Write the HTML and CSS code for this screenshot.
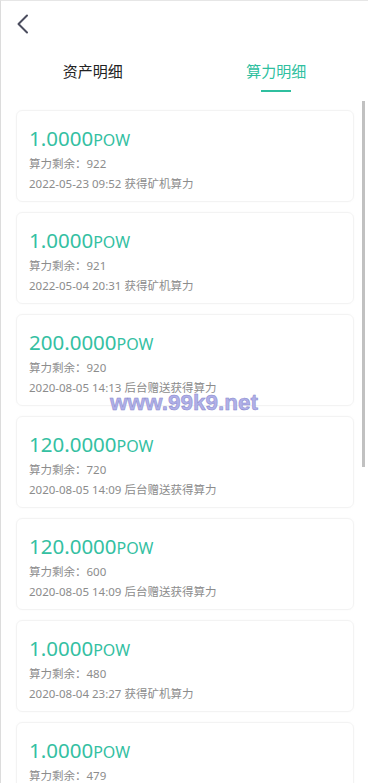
FILE: index.html
```html
<!DOCTYPE html>
<html lang="zh-CN">
<head>
<meta charset="utf-8">
<title>算力明细</title>
<link rel="stylesheet" href="styles.css">
</head>
<body>
<div class="page">
  <header class="topbar">
    <svg class="back" width="14" height="20" viewBox="0 0 14 20"><path d="M11 1.5 L2.5 10 L11 18.5" fill="none" stroke="#4b4d5e" stroke-width="2" stroke-linecap="round" stroke-linejoin="round"/></svg>
  </header>
  <nav class="tabs">
    <div class="tab">资产明细</div>
    <div class="tab active">算力明细</div>
  </nav>
  <main class="list">
    <div class="card">
      <div class="amount">1.0000<span class="unit">POW</span></div>
      <div class="meta">算力剩余：922</div>
      <div class="meta">2022-05-23 09:52 获得矿机算力</div>
    </div>
    <div class="card">
      <div class="amount">1.0000<span class="unit">POW</span></div>
      <div class="meta">算力剩余：921</div>
      <div class="meta">2022-05-04 20:31 获得矿机算力</div>
    </div>
    <div class="card">
      <div class="amount">200.0000<span class="unit">POW</span></div>
      <div class="meta">算力剩余：920</div>
      <div class="meta">2020-08-05 14:13 后台赠送获得算力</div>
    </div>
    <div class="card">
      <div class="amount">120.0000<span class="unit">POW</span></div>
      <div class="meta">算力剩余：720</div>
      <div class="meta">2020-08-05 14:09 后台赠送获得算力</div>
    </div>
    <div class="card">
      <div class="amount">120.0000<span class="unit">POW</span></div>
      <div class="meta">算力剩余：600</div>
      <div class="meta">2020-08-05 14:09 后台赠送获得算力</div>
    </div>
    <div class="card">
      <div class="amount">1.0000<span class="unit">POW</span></div>
      <div class="meta">算力剩余：480</div>
      <div class="meta">2020-08-04 23:27 获得矿机算力</div>
    </div>
    <div class="card">
      <div class="amount">1.0000<span class="unit">POW</span></div>
      <div class="meta">算力剩余：479</div>
      <div class="meta">2020-08-04 23:26 获得矿机算力</div>
    </div>
  </main>
  <div class="scrollthumb"></div>
  <div class="watermark">www.99k9.net</div>
</div>
</body>
</html>
```

FILE: styles.css
```css
html, body {
  margin: 0;
  padding: 0;
  background: #fff;
}
body {
  font-family: "Noto Sans", "Noto Sans CJK SC", sans-serif;
  overflow: hidden;
}
.page {
  position: relative;
  width: 368px;
  height: 783px;
  box-sizing: border-box;
  border-top: 1px solid #e6e6e6;
  border-left: 1px solid #dcdcdc;
  overflow: hidden;
}
.topbar {
  height: 45px;
  display: flex;
  align-items: center;
  padding-left: 15px;
  box-sizing: border-box;
  padding-top: 1px;
}
.back {
  display: block;
}
.tabs {
  display: flex;
  height: 55px;
}
.tab {
  flex: 1;
  display: flex;
  justify-content: center;
  padding-top: 14px;
  box-sizing: border-box;
  font-size: 15px;
  line-height: 22px;
  height: 55px;
  color: #222;
  position: relative;
}
.tab.active {
  color: #2fbf9f;
}
.tab.active::after {
  content: "";
  position: absolute;
  left: 50%;
  top: 44px;
  width: 30px;
  height: 2px;
  margin-left: -15px;
  background: #2fbf9f;
}
.list {
  display: flex;
  flex-direction: column;
  gap: 10px;
  padding: 9px 14px 0 15px;
}
.card {
  height: 92px;
  box-sizing: border-box;
  border: 1px solid #f3f3f3;
  border-radius: 6px;
  box-shadow: 0 0 3px rgba(0,0,0,0.025);
  padding: 13px 12px 0;
}
.amount {
  font-size: 20.5px;
  line-height: 28px;
  color: #34c0a2;
  white-space: nowrap;
}
.unit {
  font-size: 16px;
}
.meta {
  font-size: 11.5px;
  line-height: 20px;
  color: #8c8c8c;
  white-space: nowrap;
}
.scrollthumb {
  position: absolute;
  left: 361px;
  top: 100px;
  width: 3px;
  height: 366px;
  background: #c1c1c1;
}
.watermark {
  position: absolute;
  left: 109px;
  top: 388px;
  font-family: "Liberation Sans", Arial, sans-serif;
  font-weight: bold;
  font-size: 22.5px;
  line-height: 28px;
  color: #b0b0e8;
  -webkit-text-stroke: 0.5px #8888cc;
  letter-spacing: 0;
}
```
